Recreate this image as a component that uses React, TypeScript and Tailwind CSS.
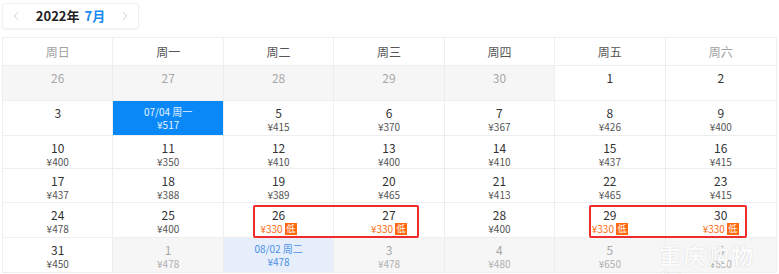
import { ChevronLeft, ChevronRight } from "lucide-react";

type Day = {
  date: string;
  price?: string;
  kind?: "muted" | "selected" | "return" | "low";
};

const weekdays = ["周日", "周一", "周二", "周三", "周四", "周五", "周六"];

const rows: Day[][] = [
  [
    { date: "26", kind: "muted" },
    { date: "27", kind: "muted" },
    { date: "28", kind: "muted" },
    { date: "29", kind: "muted" },
    { date: "30", kind: "muted" },
    { date: "1" },
    { date: "2" },
  ],
  [
    { date: "3" },
    { date: "07/04 周一", price: "¥517", kind: "selected" },
    { date: "5", price: "¥415" },
    { date: "6", price: "¥370" },
    { date: "7", price: "¥367" },
    { date: "8", price: "¥426" },
    { date: "9", price: "¥400" },
  ],
  [
    { date: "10", price: "¥400" },
    { date: "11", price: "¥350" },
    { date: "12", price: "¥410" },
    { date: "13", price: "¥400" },
    { date: "14", price: "¥410" },
    { date: "15", price: "¥437" },
    { date: "16", price: "¥415" },
  ],
  [
    { date: "17", price: "¥437" },
    { date: "18", price: "¥388" },
    { date: "19", price: "¥389" },
    { date: "20", price: "¥465" },
    { date: "21", price: "¥413" },
    { date: "22", price: "¥465" },
    { date: "23", price: "¥415" },
  ],
  [
    { date: "24", price: "¥478" },
    { date: "25", price: "¥400" },
    { date: "26", price: "¥330", kind: "low" },
    { date: "27", price: "¥330", kind: "low" },
    { date: "28", price: "¥400" },
    { date: "29", price: "¥330", kind: "low" },
    { date: "30", price: "¥330", kind: "low" },
  ],
  [
    { date: "31", price: "¥450" },
    { date: "1", price: "¥478", kind: "muted" },
    { date: "08/02 周二", price: "¥478", kind: "return" },
    { date: "3", price: "¥478", kind: "muted" },
    { date: "4", price: "¥480", kind: "muted" },
    { date: "5", price: "¥650", kind: "muted" },
    { date: "6", price: "¥650", kind: "muted" },
  ],
];

const rowHeights = ["h-[35px]", "h-[35px]", "h-[33px]", "h-[34px]", "h-[35px]", "h-[34px]"];

function Cell({ day, last }: { day: Day; last: boolean }) {
  const edge = last ? "" : "border-r border-[#eeeeee]";

  if (day.kind === "selected" || day.kind === "return") {
    const selected = day.kind === "selected";
    return (
      <div
        className={`${edge} flex flex-col items-center pt-[5px] text-[10px] leading-[12px] ${
          selected ? "bg-[#0a88f8] text-white/90" : "bg-[#e6eefb] text-[#4a90e8]"
        }`}
      >
        <span>{day.date}</span>
        <span className="mt-[1px]">{day.price}</span>
      </div>
    );
  }

  const muted = day.kind === "muted";
  return (
    <div
      className={`${edge} flex flex-col items-center pt-[4px] ${
        muted ? "bg-[#f6f6f6]" : "bg-white"
      }`}
    >
      <span className={`text-[12px] leading-[15px] ${muted ? "text-[#a8a8a8]" : "text-[#333333]"}`}>
        {day.date}
      </span>
      {day.price && day.kind === "low" && (
        <span className="flex items-center gap-[2px] text-[10px] leading-[13px]">
          <span className="text-[#ff6a10]">{day.price}</span>
          <span className="flex h-[12px] w-[12px] items-center justify-center bg-[#ff6a10] text-[9px] text-white">
            低
          </span>
        </span>
      )}
      {day.price && day.kind !== "low" && (
        <span className={`text-[10px] leading-[13px] ${muted ? "text-[#b0b0b0]" : "text-[#555555]"}`}>
          {day.price}
        </span>
      )}
    </div>
  );
}

export default function App() {
  return (
    <div
      className="h-[274px] w-[779px] overflow-hidden bg-white px-[2px] pt-[3px]"
      style={{ fontFamily: '"Noto Sans CJK SC", "Noto Sans", sans-serif' }}
    >
      {/* Month switcher */}
      <div className="flex h-[26px] w-[137px] items-center justify-between rounded-[3px] border border-[#f0f0f0] px-[6px] shadow-[0_1px_2px_rgba(0,0,0,0.05)]">
        <ChevronLeft className="h-[14px] w-[14px] text-[#c4c4c4]" strokeWidth={1.5} />
        <div className="flex items-center gap-[5px] text-[13px] font-bold">
          <span className="text-[#222222]">2022年</span>
          <span className="text-[#1a88f0]">7月</span>
        </div>
        <ChevronRight className="h-[14px] w-[14px] text-[#c4c4c4]" strokeWidth={1.5} />
      </div>

      {/* Calendar table */}
      <div className="relative mt-[8px] border border-[#eeeeee]">
        <div className="grid h-[28px] grid-cols-7 border-b border-[#eeeeee]">
          {weekdays.map((w, i) => (
            <div
              key={w}
              className={`flex items-center justify-center text-[12px] ${
                i < 6 ? "border-r border-[#eeeeee]" : ""
              } ${i === 0 || i === 6 ? "text-[#a0a0a0]" : "text-[#555555]"}`}
            >
              {w}
            </div>
          ))}
        </div>

        {rows.map((row, r) => (
          <div
            key={r}
            className={`grid grid-cols-7 ${rowHeights[r]} ${
              r < rows.length - 1 ? "border-b border-[#eeeeee]" : ""
            }`}
          >
            {row.map((day, i) => (
              <Cell key={i} day={day} last={i === 6} />
            ))}
          </div>
        ))}

        {/* Lowest price highlights */}
        <div className="absolute left-[250px] top-[167px] h-[33px] w-[166px] rounded-[2px] border-2 border-[#f02b2b]" />
        <div className="absolute left-[586px] top-[167px] h-[33px] w-[158px] rounded-[2px] border-2 border-[#f02b2b]" />

        {/* Watermark */}
        <div className="pointer-events-none absolute left-[656px] top-[203px] flex flex-col items-start text-white/95 [text-shadow:0_0_1px_rgba(0,0,0,0.2)]">
          <span className="text-[22px] font-bold leading-[26px] tracking-[2px]">重庆购物狂</span>
          <span className="-mt-[4px] text-[15px] leading-[16px]">go.cqmmgo.com</span>
        </div>
      </div>
    </div>
  );
}
